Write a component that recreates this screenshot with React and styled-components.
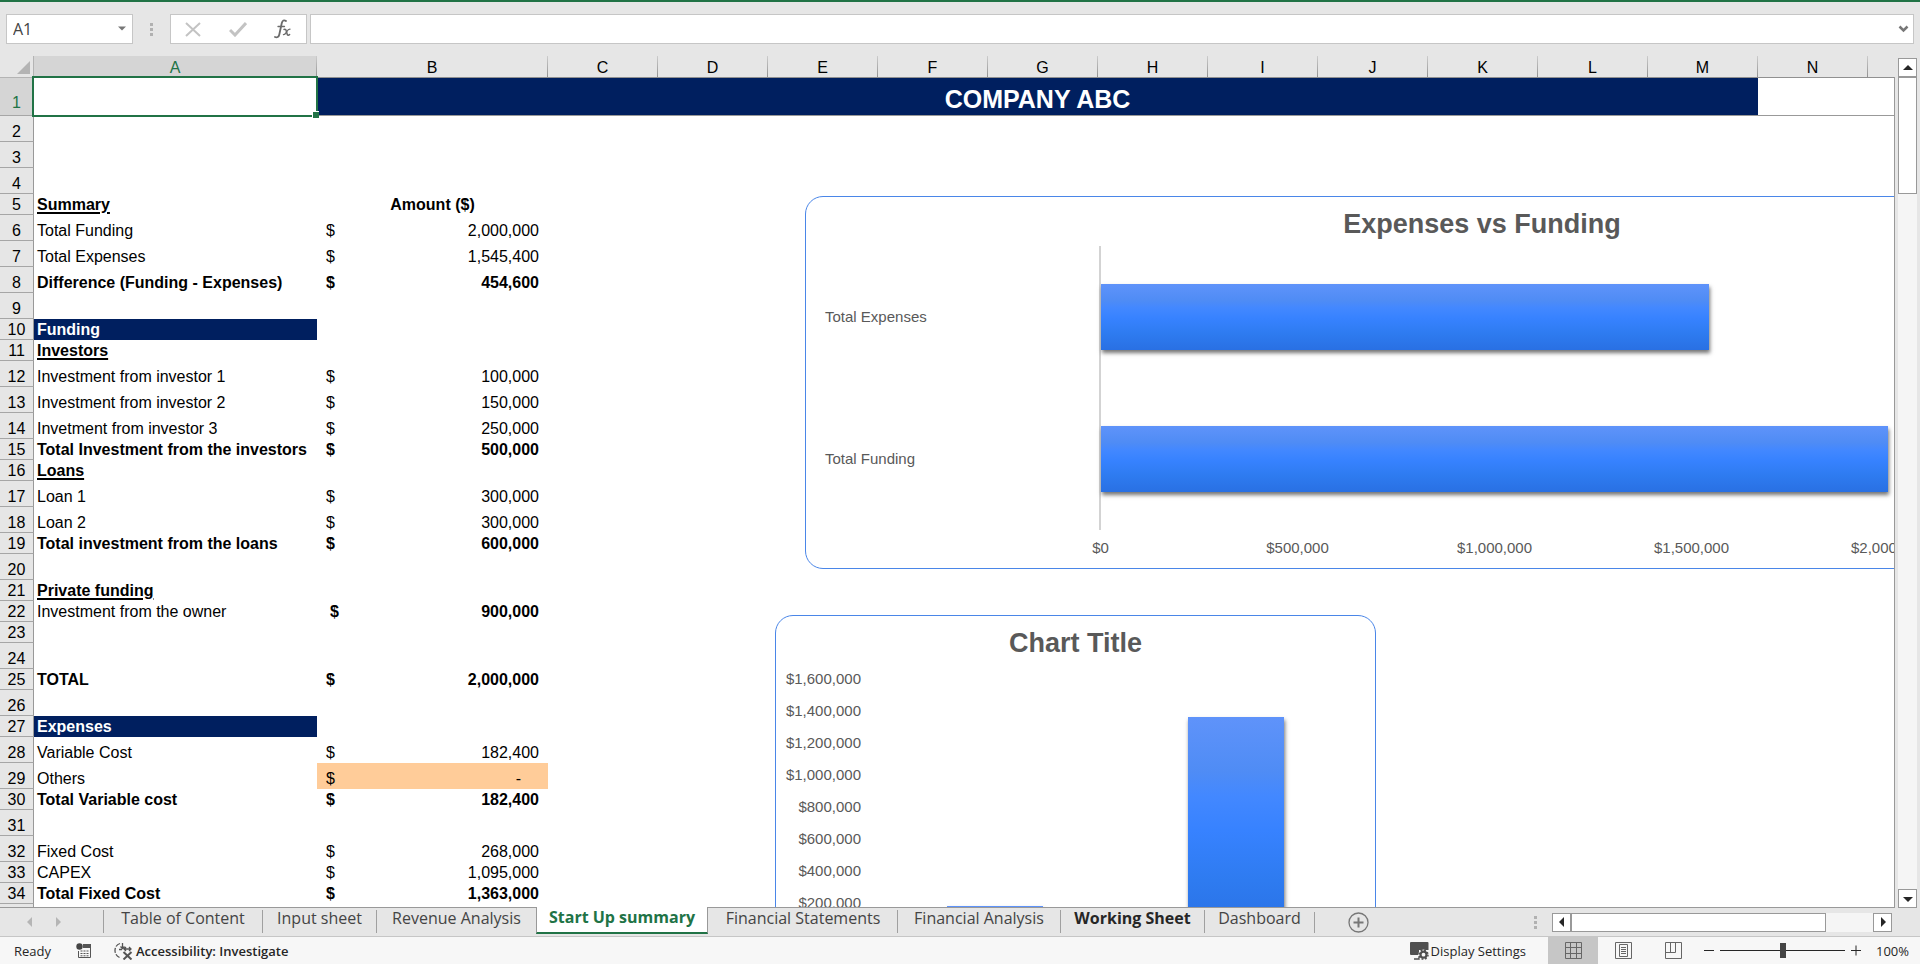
import React from 'react';
import styled, { createGlobalStyle, css } from 'styled-components';

const GlobalStyle = createGlobalStyle`
  * { box-sizing: border-box; }
  body { margin: 0; background: #e6e6e6; }
  button, input { font: inherit; color: inherit; }
  button { border: none; padding: 0; background: none; }
`;

const sheetFont = "'Liberation Sans', Arial, sans-serif";
const uiFont = "'Open Sans', 'Noto Sans', sans-serif";

const Window = styled.div`
  display: flex;
  flex-direction: column;
  height: 100vh;
  overflow: hidden;
  border-top: 2px solid #217346;
  background: #e6e6e6;
  font-family: ${uiFont};
  color: #262626;
`;

/* ---------- formula bar ---------- */

const FormulaBar = styled.div`
  display: flex;
  flex: none;
  align-items: center;
  height: 54px;
  padding: 0 6px 0 6px;
`;

const BarBox = styled.div`
  display: flex;
  align-items: center;
  height: 30px;
  border: 1px solid #c6c6c6;
  background: #fff;
`;

const NameBox = styled(BarBox)`
  width: 127px;
  padding: 0 6px;

  input {
    flex: 1;
    min-width: 0;
    padding: 0;
    border: none;
    outline: none;
    background: none;
    font-size: 16px;
    color: #444;
  }
`;

const BarDots = styled.div`
  display: flex;
  flex-direction: column;
  align-items: center;
  gap: 2px;
  width: ${(p) => p.$width}px;

  i {
    width: 3px;
    height: 3px;
    background: #b1b1b1;
  }
`;

const FormulaButtons = styled(BarBox)`
  width: 137px;
  justify-content: space-between;
  padding: 0 14px;
  margin-right: 3px;

  button { display: flex; }
`;

const FormulaField = styled(BarBox)`
  flex: 1;
  padding-right: 4px;

  input {
    flex: 1;
    min-width: 0;
    border: none;
    outline: none;
    background: none;
    font-size: 16px;
  }

  button { display: flex; }
`;

/* ---------- sheet ---------- */

const Workspace = styled.div`
  display: flex;
  flex: 1;
  min-height: 0;
`;

const SheetArea = styled.div`
  position: relative;
  flex: 1;
  min-width: 0;
  overflow: hidden;
  border-bottom: 1px solid #999;
  font-family: ${sheetFont};
  font-size: 16px;
  line-height: 18px;
  color: #000;

  &::after {
    content: '';
    position: absolute;
    top: 21px;
    right: 0;
    bottom: 0;
    width: 1px;
    background: #999;
  }
`;

const Grid = styled.table`
  width: 1978px;
  table-layout: fixed;
  border-collapse: separate;
  border-spacing: 0;
  background: #fff;

  th, td {
    padding: 0;
    font-weight: normal;
    white-space: nowrap;
  }
`;

const ColumnHead = styled.th`
  && { padding-top: 2px; }
  height: 22px;
  border-bottom: 1px solid #999;
  border-right: 1px solid;
  border-image: linear-gradient(#cfcfcf, #8f8f8f) 1;
  background: ${(p) => (p.$active ? '#d5d5d5' : '#e6e6e6')};
  color: ${(p) => (p.$active ? '#217346' : '#000')};
`;

const Corner = styled.th`
  height: 22px;
  border-right: 1px solid #b4b4b4;
  border-bottom: 1px solid #b4b4b4;
  background: #e6e6e6;
  vertical-align: bottom;

  svg { display: block; margin: 0 3px 3px auto; }
`;

const RowHead = styled.th`
  && { padding-bottom: ${(p) => (p.$active ? 3 : 0)}px; }
  height: ${(p) => p.$height}px;
  border-right: 1px solid #999;
  border-bottom: 1px solid #a6a6a6;
  background: ${(p) => (p.$active ? '#d5d5d5' : '#e6e6e6')};
  color: ${(p) => (p.$active ? '#217346' : '#000')};
  vertical-align: bottom;
`;

const LabelCell = styled.td`
  && {
    padding-left: 3px;
    padding-bottom: 1px;
    vertical-align: bottom;
    font-weight: ${(p) => (p.$bold ? 'bold' : 'normal')};
  }
  text-decoration: ${(p) => (p.$underline ? 'underline 2px' : 'none')};
  text-underline-offset: 2px;
  ${(p) => p.$band && css`background: #001f5f; color: #fff;`}
`;

const AmountCell = styled.td`
  && {
    padding-bottom: 1px;
    vertical-align: bottom;
    font-weight: ${(p) => (p.$bold ? 'bold' : 'normal')};
  }
  text-align: center;
  ${(p) => p.$input && css`background: #ffcc99;`}
`;

const Money = styled.div`
  display: flex;
  justify-content: space-between;
  padding: 0 9px 0 ${(p) => (p.$indent ? 13 : 9)}px;
`;

const Dash = styled.span`
  padding-right: 18px;
`;

const SelectedCell = styled.td`
  position: relative;
  border-bottom: 1px solid #999;

  &::before {
    content: '';
    position: absolute;
    inset: -2px -1px -2px -2px;
    border: 2px solid #217346;
  }

  &::after {
    content: '';
    position: absolute;
    right: -2px;
    bottom: -3px;
    width: 6px;
    height: 6px;
    border-top: 1px solid #fff;
    border-left: 1px solid #fff;
    background: #217346;
  }
`;

const TitleCell = styled.td`
  border-bottom: 1px solid #999;
  background: #001f5f;
  color: #fff;
  text-align: center;
  font-size: 25px;
  line-height: 28px;

  && { font-weight: bold; padding-top: 5px; }
`;

const TopCell = styled.td`
  border-bottom: 1px solid #999;
`;

/* ---------- charts floating above the cells ---------- */

const ChartCard = styled.figure`
  position: absolute;
  left: ${(p) => p.$left}px;
  top: ${(p) => p.$top}px;
  width: ${(p) => p.$width}px;
  height: ${(p) => p.$height}px;
  margin: 0;
  display: flex;
  flex-direction: column;
  border: 1px solid #4a86e8;
  border-radius: 18px;
  background: #fff;
  font-size: 15px;
  color: #595959;
`;

const ChartTitle = styled.figcaption`
  padding-top: 11px;
  height: 49px;
  text-align: center;
  font-size: 27px;
  line-height: 32px;
  font-weight: bold;
`;

const barFill = css`
  background: linear-gradient(
    ${'#5f93fa 0%, #4f8cf5 25%, #4388ff 36%, #3782ff 52%, #2e7bf0 75%, #2970e3 100%'}
  );
  box-shadow: 1px 3px 4px rgba(0, 0, 0, 0.55);
`;

const HorizontalPlot = styled.div`
  display: grid;
  grid-template-columns: 274px 789px;
  grid-auto-rows: 142px;
  padding-left: 19px;
`;

const CategoryName = styled.div`
  align-self: center;
`;

const BarTrack = styled.div`
  display: flex;
  align-items: center;
  align-self: stretch;
  border-left: 2px solid #d3d3d3;
`;

const HBar = styled.div`
  height: 66px;
  ${barFill}
`;

const HorizontalAxis = styled.div`
  display: flex;
  padding: 9px 0 0 196px;

  span {
    flex: none;
    width: 197px;
    text-align: center;
  }
`;

const VerticalPlot = styled.div`
  display: flex;
  flex: 1;
`;

const VerticalAxis = styled.div`
  width: 85px;
  margin-top: -2px;
  text-align: right;
  line-height: 32px;
`;

const Columns = styled.div`
  display: flex;
  align-items: flex-end;
  justify-content: space-around;
  width: 483px;
  height: 256px;
  margin: 14px 0 0 13px;
`;

const VBar = styled.div`
  width: 96px;
  ${barFill}
`;

/* ---------- scroll bars ---------- */

const VScroll = styled.div`
  display: flex;
  flex-direction: column;
  flex: none;
  width: 19px;
  margin: 2px 3px 0;
  background: #f5f5f5;
`;

const HScroll = styled.div`
  display: flex;
  flex: none;
  width: 340px;
  height: 19px;
  margin-right: 28px;
  background: #f5f5f5;
`;

const ScrollButton = styled.button`
  display: flex;
  flex: none;
  align-items: center;
  justify-content: center;
  width: 19px;
  height: 19px;
  border: 1px solid #999;
  background: #fff;
`;

const Thumb = styled.div`
  flex: none;
  border: 1px solid #999;
  background: #fff;
  ${(p) => (p.$vertical ? 'height: 117px;' : 'width: 255px;')}
`;

const Spacer = styled.div`
  flex: 1;
`;

/* ---------- sheet tabs ---------- */

const TabBar = styled.nav`
  display: flex;
  flex: none;
  align-items: center;
  height: 29px;
  border-bottom: 1px solid #c6c6c6;
`;

const TabArrows = styled.div`
  display: flex;
  align-items: center;
  gap: 19px;
  width: 103px;
  padding-left: 25px;

  button { display: flex; }
`;

const Tab = styled.button`
  position: relative;
  flex: none;
  align-self: flex-start;
  width: ${(p) => p.$width}px;
  height: 25px;
  padding-bottom: 6px;
  font-size: 16px;
  line-height: 20px;
  white-space: nowrap;
  color: #444;
  border-left: 1px solid #ababab;
  border-image: linear-gradient(transparent 3px, #a0a0a0 3px) 1;

  ${(p) => p.$strong && css`
    font-weight: bold;
    color: #262626;
  `}

  ${(p) => p.$active && css`
    margin-top: -1px;
    height: 27px;
    border-image: none;
    border-left: 1px solid #999;
    border-right: 1px solid #999;
    border-bottom: 2px solid #217346;
    background: #fff;
    color: #217346;
    font-weight: bold;
  `}

  ${(p) => p.$afterActive && css`border-image: none; border-color: transparent;`}
`;

const TabEnd = styled.div`
  width: 34px;
  height: 21px;
  border-left: 1px solid #a0a0a0;
`;

const AddSheet = styled.button`
  display: flex;
  margin-right: auto;
`;

/* ---------- status bar ---------- */

const StatusBar = styled.footer`
  display: flex;
  flex: none;
  align-items: center;
  height: 27px;
  padding-right: 11px;
  background: #f7f7f7;
  font-size: 13px;
  white-space: nowrap;
`;

const ReadyText = styled.span`
  width: 76px;
  padding-left: 14px;
`;

const StatusButton = styled.button`
  display: flex;
  align-items: center;
  gap: 2px;
  font-weight: ${(p) => (p.$strong ? 600 : 400)};
  ${(p) => p.$push && 'margin-right: auto;'}

  svg { flex: none; }
`;

const MacroButton = styled.button`
  display: flex;
  width: 38px;
`;

const Views = styled.div`
  display: flex;
  align-self: stretch;
  margin: 0 4px 0 22px;
`;

const ViewButton = styled.button`
  display: flex;
  align-items: center;
  justify-content: center;
  width: 50px;
  background: ${(p) => (p.$active ? '#c6c6c6' : 'transparent')};
`;

const ZoomStep = styled.button`
  display: flex;
  padding: 2px;
`;

const ZoomSlider = styled.input`
  appearance: none;
  width: 125px;
  height: 15px;
  margin: 0 4px;
  background: linear-gradient(#262626, #262626) center / 100% 1px no-repeat;

  &::-webkit-slider-thumb {
    appearance: none;
    width: 6px;
    height: 15px;
    background: #444;
  }
`;

const ZoomLevel = styled.output`
  width: 46px;
  text-align: right;
`;

/* ---------- data ---------- */

// the last column only shows its left edge
const columns = [...'CDEFGHIJKLMN', ''];

const TALL = 26;
const SHORT = 21;

const rows = [
  { h: TALL },
  { h: TALL },
  { h: TALL },
  { h: SHORT, label: 'Summary', bold: true, underline: true, heading: 'Amount ($)' },
  { h: TALL, label: 'Total Funding', amount: '2,000,000' },
  { h: TALL, label: 'Total Expenses', amount: '1,545,400' },
  { h: TALL, label: 'Difference (Funding - Expenses)', amount: '454,600', bold: true },
  { h: TALL },
  { h: SHORT, label: 'Funding', bold: true, band: true },
  { h: SHORT, label: 'Investors', bold: true, underline: true },
  { h: TALL, label: 'Investment from investor 1', amount: '100,000' },
  { h: TALL, label: 'Investment from investor 2', amount: '150,000' },
  { h: TALL, label: 'Invetment from investor 3', amount: '250,000' },
  { h: SHORT, label: 'Total Investment from the investors', amount: '500,000', bold: true },
  { h: SHORT, label: 'Loans', bold: true, underline: true },
  { h: TALL, label: 'Loan 1', amount: '300,000' },
  { h: TALL, label: 'Loan 2', amount: '300,000' },
  { h: SHORT, label: 'Total investment from the loans', amount: '600,000', bold: true },
  { h: TALL },
  { h: SHORT, label: 'Private funding', bold: true, underline: true },
  { h: SHORT, label: 'Investment from the owner', amount: '900,000', boldAmount: true, indent: true },
  { h: SHORT },
  { h: TALL },
  { h: SHORT, label: 'TOTAL', amount: '2,000,000', bold: true },
  { h: TALL },
  { h: SHORT, label: 'Expenses', bold: true, band: true },
  { h: TALL, label: 'Variable Cost', amount: '182,400' },
  { h: TALL, label: 'Others', amount: '-', input: true },
  { h: SHORT, label: 'Total Variable cost', amount: '182,400', bold: true },
  { h: TALL },
  { h: TALL, label: 'Fixed Cost', amount: '268,000' },
  { h: SHORT, label: 'CAPEX', amount: '1,095,000' },
  { h: SHORT, label: 'Total Fixed Cost', amount: '1,363,000', bold: true },
  { h: TALL, unnumbered: true },
];

const fundingBars = [
  { name: 'Total Expenses', value: 1545400 },
  { name: 'Total Funding', value: 2000000 },
];

const fundingTicks = ['$0', '$500,000', '$1,000,000', '$1,500,000', '$2,000,000'];

const costBars = [182400, 1363000];

const costTicks = [
  '$1,600,000', '$1,400,000', '$1,200,000', '$1,000,000',
  '$800,000', '$600,000', '$400,000', '$200,000',
];

const tabs = [
  { name: 'Table of Content', width: 159 },
  { name: 'Input sheet', width: 114 },
  { name: 'Revenue Analysis', width: 160 },
  { name: 'Start Up summary', width: 172, active: true },
  { name: 'Financial Statements', width: 189, afterActive: true },
  { name: 'Financial Analysis', width: 163 },
  { name: 'Working Sheet', width: 144, strong: true },
  { name: 'Dashboard', width: 110 },
];

/* ---------- icons ---------- */

const Triangle = ({ points, size = 10, color = '#262626' }) => (
  <svg width={size} height={size} viewBox="0 0 10 10" aria-hidden="true">
    <polygon points={points} fill={color} />
  </svg>
);

const CancelIcon = () => (
  <svg width="17" height="15" viewBox="0 0 17 15" fill="none" stroke="#c3c3c3" strokeWidth="2">
    <path d="M1 1l14 13M15 1L1 14" />
  </svg>
);

const AcceptIcon = () => (
  <svg width="18" height="15" viewBox="0 0 18 15" fill="none" stroke="#c3c3c3" strokeWidth="3">
    <path d="M1 8l5 5L17 1" />
  </svg>
);

const FxIcon = () => (
  <svg width="18" height="20" viewBox="0 0 18 20" fill="none" stroke="#6a6a6a" strokeLinecap="round">
    <path d="M12 2c-2-1.500-3.600-.5-4.200 2L5.300 15.500C4.800 18 3 19 1 18" strokeWidth="1.800" />
    <path d="M4 7.500h6.500" strokeWidth="1.300" />
    <path d="M10 10.500c1.500-.8 2 .2 2.300 1.500l.8 3c.4 1.500 1.500 1.500 2.500.5" strokeWidth="1.500" />
    <path d="M16 10.200c-1.800-.2-2.800 1.700-3.600 3s-1.600 2.700-3 2.500" strokeWidth="1.200" />
  </svg>
);

const MacroIcon = () => (
  <svg width="16" height="16" viewBox="0 0 16 16">
    <path d="M7 2.500h7.500v12h-12V8" fill="none" stroke="#555" />
    <path d="M7 1h8v4H7z" fill="#555" />
    <circle cx="3.500" cy="3.500" r="3.200" fill="#444" />
    <path d="M4.500 8h8M4.500 10.500h8M4.500 12.800h8" stroke="#555" strokeDasharray="2 1" />
  </svg>
);

const AccessibilityIcon = () => (
  <svg width="20" height="18" viewBox="0 0 20 18" fill="none" stroke="#555" strokeWidth="1.300">
    <path d="M6 1.500C2.500 2.500 1 5.500 1 8.500s1.500 5.500 4.500 7" strokeDasharray="5 1.500" />
    <path d="M8.500 1v5M6.500 4.500l2 2 2-2M5 7.500h3M12 5l-2 2 2 2M10 7h7M15 5l2 2-2 2" />
    <path d="M9.500 10l8 7.500M17.500 10l-8 7.500" strokeWidth="2" />
  </svg>
);

const DisplayIcon = () => (
  <svg width="19" height="18" viewBox="0 0 19 18">
    <path d="M1 0h16.500a1 1 0 011 1v7H9v5H1a1 1 0 01-1-1V1a1 1 0 011-1z" fill="#505050" />
    <path d="M4 17h5v-3" stroke="#505050" fill="none" strokeWidth="1.500" />
    <circle cx="13.500" cy="12.700" r="5.300" fill="#f7f7f7" />
    <circle cx="13.500" cy="12.700" r="3" fill="none" stroke="#505050" strokeWidth="2.200" />
    <circle cx="13.500" cy="12.700" r="4.500" fill="none" stroke="#505050" strokeWidth="1.500" strokeDasharray="1.770 1.770" />
  </svg>
);

const NormalViewIcon = () => (
  <svg width="17" height="17" viewBox="0 0 17 17" fill="none" stroke="#666">
    <path d="M.5.5h16v16H.5zM5.500.5v16M11.500.5v16M.5 5.500h16M.5 11.500h16" />
  </svg>
);

const PageLayoutIcon = () => (
  <svg width="17" height="17" viewBox="0 0 17 17" fill="none" stroke="#666">
    <path d="M.5.5h16v16H.5zM4.500 2.500h8v12h-8zM6 5.500h5M6 7.500h5M6 9.500h5M6 11.500h5" />
  </svg>
);

const PageBreakIcon = () => (
  <svg width="17" height="17" viewBox="0 0 17 17" fill="none" stroke="#666">
    <path d="M.5.5h16v16H.5zM.5 10.500h10V.5M5.500.5v10" />
  </svg>
);

const StepIcon = ({ plus }) => (
  <svg width="10" height="11" viewBox="0 0 10 11" stroke="#262626">
    <path d={plus ? 'M0 5.500h10M5 .5v10' : 'M0 5.500h10'} />
  </svg>
);

const AddIcon = () => (
  <svg width="21" height="21" viewBox="0 0 21 21" fill="none" stroke="#777">
    <circle cx="10.500" cy="10.500" r="9.500" strokeWidth="1.300" />
    <path d="M5.500 10.500h10M10.500 5.500v10" strokeWidth="2" />
  </svg>
);

const Dots = ({ width }) => (
  <BarDots $width={width}><i /><i /><i /></BarDots>
);

/* ---------- parts ---------- */

function Amount({ row }) {
  if (row.heading) return row.heading;
  if (!row.amount) return null;
  return (
    <Money $indent={row.indent}>
      <span>$</span>
      {row.amount === '-' ? <Dash>-</Dash> : <span>{row.amount}</span>}
    </Money>
  );
}

function Sheet() {
  return (
    <Grid>
      <colgroup>
        <col style={{ width: 34 }} />
        <col style={{ width: 283 }} />
        <col style={{ width: 231 }} />
        {columns.map((c) => <col key={c} style={{ width: 110 }} />)}
      </colgroup>
      <thead>
        <tr>
          <Corner aria-label="Select all">
            <svg width="13" height="13" viewBox="0 0 13 13"><path d="M13 0v13H0z" fill="#b4b4b4" /></svg>
          </Corner>
          <ColumnHead $active>A</ColumnHead>
          <ColumnHead>B</ColumnHead>
          {columns.map((c) => <ColumnHead key={c}>{c}</ColumnHead>)}
        </tr>
      </thead>
      <tbody>
        <tr>
          <RowHead $height={38} $active>1</RowHead>
          <SelectedCell />
          <TitleCell colSpan={12}>COMPANY ABC</TitleCell>
          <TopCell colSpan={2} />
        </tr>
        {rows.map((row, i) => (
          <tr key={i}>
            <RowHead $height={row.h}>{row.unnumbered ? null : i + 2}</RowHead>
            <LabelCell $bold={row.bold} $underline={row.underline} $band={row.band}>{row.label}</LabelCell>
            <AmountCell $bold={row.bold || row.boldAmount} $input={row.input}>
              <Amount row={row} />
            </AmountCell>
            <td colSpan={13} />
          </tr>
        ))}
      </tbody>
    </Grid>
  );
}

function FundingChart() {
  return (
    <ChartCard $left={805} $top={140} $width={1354} $height={373}>
      <ChartTitle>Expenses vs Funding</ChartTitle>
      <HorizontalPlot>
        {fundingBars.map((bar) => (
          <React.Fragment key={bar.name}>
            <CategoryName>{bar.name}</CategoryName>
            <BarTrack>
              <HBar style={{ width: `${bar.value / 20000}%` }} />
            </BarTrack>
          </React.Fragment>
        ))}
      </HorizontalPlot>
      <HorizontalAxis>
        {fundingTicks.map((tick) => <span key={tick}>{tick}</span>)}
      </HorizontalAxis>
    </ChartCard>
  );
}

function CostChart() {
  return (
    <ChartCard $left={775} $top={559} $width={601} $height={373}>
      <ChartTitle>Chart Title</ChartTitle>
      <VerticalPlot>
        <VerticalAxis>
          {costTicks.map((tick) => <div key={tick}>{tick}</div>)}
        </VerticalAxis>
        <Columns>
          {costBars.map((value) => (
            <VBar key={value} style={{ height: `${value / 16000}%` }} />
          ))}
        </Columns>
      </VerticalPlot>
    </ChartCard>
  );
}

export default function App() {
  return (
    <>
      <GlobalStyle />
      <Window>
        <FormulaBar>
          <NameBox>
            <input aria-label="Name box" defaultValue="A1" />
            <Triangle points="0,2 10,2 5,7" size={8} color="#777" />
          </NameBox>
          <Dots width={37} />
          <FormulaButtons>
            <button aria-label="Cancel"><CancelIcon /></button>
            <button aria-label="Enter"><AcceptIcon /></button>
            <button aria-label="Insert function"><FxIcon /></button>
          </FormulaButtons>
          <FormulaField>
            <input aria-label="Formula bar" />
            <button aria-label="Expand formula bar">
              <svg width="11" height="8" viewBox="0 0 11 8" fill="none" stroke="#777" strokeWidth="2.500">
                <path d="M1.500 1.500l4 4 4-4" />
              </svg>
            </button>
          </FormulaField>
        </FormulaBar>

        <Workspace>
          <SheetArea>
            <Sheet />
            <FundingChart />
            <CostChart />
          </SheetArea>
          <VScroll>
            <ScrollButton aria-label="Scroll up"><Triangle points="5,2 10,7 0,7" /></ScrollButton>
            <Thumb $vertical />
            <Spacer />
            <ScrollButton aria-label="Scroll down"><Triangle points="0,3 10,3 5,8" /></ScrollButton>
          </VScroll>
        </Workspace>

        <TabBar>
          <TabArrows>
            <button aria-label="Previous sheet"><Triangle points="7,0 7,10 2,5" color="#b5b5b5" /></button>
            <button aria-label="Next sheet"><Triangle points="2,0 2,10 7,5" color="#b5b5b5" /></button>
          </TabArrows>
          {tabs.map((tab) => (
            <Tab
              key={tab.name}
              $width={tab.width}
              $active={tab.active}
              $strong={tab.strong}
              $afterActive={tab.afterActive}
            >
              {tab.name}
            </Tab>
          ))}
          <TabEnd />
          <AddSheet aria-label="New sheet"><AddIcon /></AddSheet>
          <Dots width={34} />
          <HScroll>
            <ScrollButton aria-label="Scroll left"><Triangle points="7,0 7,10 2,5" /></ScrollButton>
            <Thumb />
            <Spacer />
            <ScrollButton aria-label="Scroll right"><Triangle points="3,0 3,10 8,5" /></ScrollButton>
          </HScroll>
        </TabBar>

        <StatusBar>
          <ReadyText>Ready</ReadyText>
          <MacroButton aria-label="Record macro"><MacroIcon /></MacroButton>
          <StatusButton $strong $push>
            <AccessibilityIcon />
            Accessibility: Investigate
          </StatusButton>
          <StatusButton>
            <DisplayIcon />
            Display Settings
          </StatusButton>
          <Views>
            <ViewButton $active aria-label="Normal"><NormalViewIcon /></ViewButton>
            <ViewButton aria-label="Page layout"><PageLayoutIcon /></ViewButton>
            <ViewButton aria-label="Page break preview"><PageBreakIcon /></ViewButton>
          </Views>
          <ZoomStep aria-label="Zoom out"><StepIcon /></ZoomStep>
          <ZoomSlider type="range" min="0" max="100" defaultValue="50" aria-label="Zoom" />
          <ZoomStep aria-label="Zoom in"><StepIcon plus /></ZoomStep>
          <ZoomLevel>100%</ZoomLevel>
        </StatusBar>
      </Window>
    </>
  );
}
